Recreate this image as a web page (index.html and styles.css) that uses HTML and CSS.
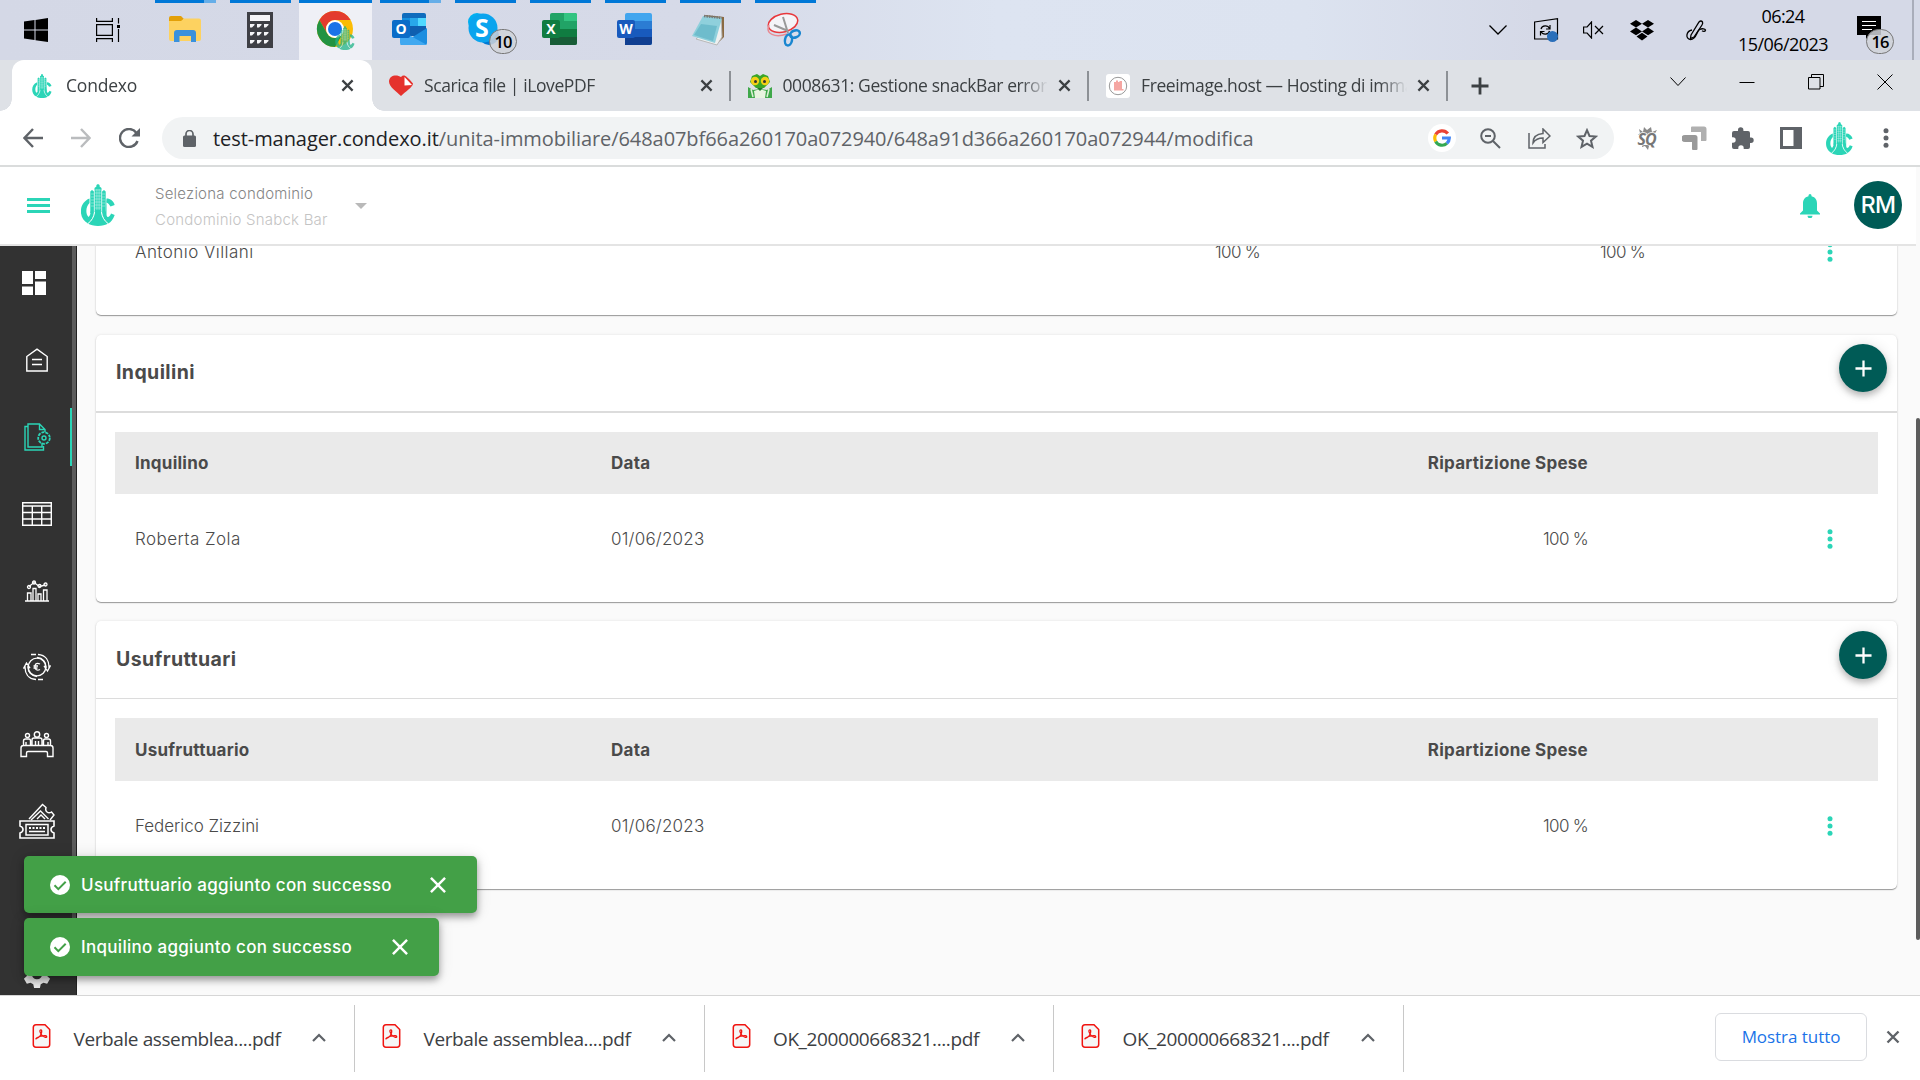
FILE: index.html
```html
<!DOCTYPE html>
<html lang="it">
<head>
    <meta charset="UTF-8">
    <meta name="viewport" content="width=device-width, initial-scale=1.0">
    <title>Condexo</title>
    <link rel="stylesheet" href="styles.css">
</head>
<body>
    <!-- Shared symbols -->
    <svg class="symbols">
        <symbol id="logo" viewBox="0 0 34 42">
            <path d="M13.500 29V4l1.900-1.500V1L17 0l1.600 1v1.500L20.500 4v25z M9.300 29V7.500L11 6l2 1.500V29z M21 29V7.500L23 6l1.700 1.500V29z"/>
            <path d="M8.500 14.500C-3 19-2.500 35 7 39.500c4-3 6-7 6.500-12H9.500c0 3-.5 4-2 5.500C4.500 30 4.500 23 8.500 19z"/>
            <path d="M25.500 14.500c4 0 7 2.500 8.200 6.500L29.500 22.500c-.8-1.500-2-3-4-4v10.500c0 2 0 3 1 4 2 0 3-2 3.500-3.500l3.700 1.500c-1.500 4.500-4 7.500-6.700 8.500-4-3-6-7-6.500-12h4z"/>
            <path d="M14 27h6c1 6 4 10 7.300 12.300-5 3.600-15.600 3.600-20.600 0C10 37 13 33 14 27z"/>
            <path class="logo-windows" d="M14 6h6M14 9h6M14 12h6M14 15h6M14 18h6M14 21h6M14 24h6M10 10h3M10 13h3M10 16h3M10 19h3M10 22h3M21 10h3M21 13h3M21 16h3M21 19h3M21 22h3M15.900 5v21M18.100 5v21M13.200 6v22M20.800 6v22"/>
            <path class="logo-gap" d="M13.500 28c-.5 5-3 9-6.500 11.500M20.500 28c.5 5 3 9 6.500 11.500"/>
        </symbol>
        <symbol id="close" viewBox="0 0 14 14"><path d="M1.500 1.500l11 11M12.500 1.500l-11 11"/></symbol>
        <symbol id="dots" viewBox="0 0 6 20"><circle cx="3" cy="2.700" r="2.500"/><circle cx="3" cy="10" r="2.500"/><circle cx="3" cy="17.300" r="2.500"/></symbol>
        <symbol id="plus" viewBox="0 0 18 18"><path d="M9 0.500v17M0.500 9h17"/></symbol>
        <symbol id="up" viewBox="0 0 14 9"><path d="M1 8l6-6 6 6"/></symbol>
        <symbol id="check" viewBox="0 0 20 20"><circle cx="10" cy="10" r="10" fill="#fff"/><path d="M4.500 10.300l3.800 3.800 7.400-7.400" fill="none" stroke="#43a047" stroke-width="2"/></symbol>
        <symbol id="pdf" viewBox="0 0 18 24">
            <path d="M3.500 .8h9l4.700 4.700V20.500q0 2.700-2.700 2.700H3.500Q.8 23.200.8 20.500V3.500Q.8.800 3.500.800" fill="#f6f6f6" stroke="#f01410" stroke-width="1.500"/>
            <path d="M4 14.500c3-1 5.500-4.500 5.200-7.500-.2-1.700-2-1.500-1.800.3.300 2.700 3 5.400 5.500 6 1.800.3 1.800-1.500 0-1.600-2.800-.1-6 .6-8.500 2-1.200.8-1.200 1.500-.4.800z" fill="none" stroke="#f01410" stroke-width="1.300"/>
        </symbol>
    </svg>

    <!-- Windows taskbar -->
    <div class="taskbar">
        <div class="task-start"><svg width="24" height="24" viewBox="0 0 24 24"><path d="M0 3.600l10.500-1.500v9.400H0zM11.500 2L24 0v11.500H11.500zM0 12.500h10.500v9.400L0 20.400zM11.500 12.500H24V24l-12.500-1.800z"/></svg></div>
        <div class="task-view"><svg width="25" height="24" viewBox="0 0 25 24" fill="none" stroke="#000" stroke-width="1.200"><path d="M.6 0v3.400h15.800V0M.6 6.600h15.800v10.800H.6zM.6 24v-3.400h15.800V24M22.500 0v5.500M22.500 11v13"/><path d="M21 7h3v3h-3z" fill="#000" stroke="none"/></svg></div>
        <div class="task multi">
            <svg width="32" height="28" viewBox="0 0 32 28"><path d="M0 2q0-2 2-2h10l3 3h-1v5H0z" fill="#e3a008"/><path d="M0 5h12l3-2.500h15q2 0 2 2V23q0 2-2 2H2q-2 0-2-2z" fill="#fdd260"/><path d="M5 26V17q0-3 3-3h16q3 0 3 3v9h-5v-6H10.500v6z" fill="#3a91dc"/></svg>
        </div>
        <div class="task">
            <svg width="26" height="36" viewBox="0 0 26 36"><path d="M0 0h26v36H0z" fill="#3e3f45"/><path d="M3 3h20v6H3z" fill="#f5f5f8"/><path d="M3 12h4.500v1L5 15.500H3zM10 12h4.500v1L12 15.500h-2zM17 12h4.500v1L19 15.500h-2zM3 20h4.500v1L5 23.500H3zM10 20h4.500v1L12 23.500h-2zM17 20h4.500v1L19 23.500h-2zM3 28h4.500v1L5 31.500H3zM10 28h4.500v1L12 31.500h-2zM17 28h4.500v1L19 31.500h-2z" fill="#f5f5f8"/></svg>
        </div>
        <div class="task active">
            <svg width="40" height="40" viewBox="0 0 40 40"><circle cx="19" cy="19" r="18" fill="#fbbc05"/><path d="M3.400 10A18 18 0 0 1 34.600 10H19a9 9 0 0 0-7.800 13.500z" fill="#e33b2e"/><path d="M3.400 10A18 18 0 0 0 19 37l7.800-13.500a9 9 0 0 1-15.600 0z" fill="#229342"/><circle cx="19" cy="19" r="9" fill="#fff"/><circle cx="19" cy="19" r="7" fill="#1a73e8"/><use class="plain-logo" href="#logo" x="19" y="16" width="20" height="24" fill="#20b488" opacity=".75"/></svg>
        </div>
        <div class="task multi">
            <svg width="36" height="34" viewBox="0 0 36 34"><path d="M10 2q0-2 2-2h20q2 0 2 2v14H10z" fill="#0f6cbd"/><path d="M10 5h8v8h-8z" fill="#1490df"/><path d="M18 5h8v8h-8z" fill="#28a8ea"/><path d="M26 5h8v8h-8z" fill="#50d9ff"/><path d="M10 13h24v10H10z" fill="#0f5fb0"/><path d="M8 32l27-17v15q0 2-2 2z" fill="#1c8ee0"/><path d="M8 17l27 15H10q-2 0-2-2z" fill="#40a8f0"/><rect y="7" width="18" height="18" rx="2" fill="#0a6cc8"/><text x="9" y="21" class="office">O</text></svg>
        </div>
        <div class="task">
            <svg width="36" height="36" viewBox="0 0 36 36"><circle cx="10" cy="10" r="9" fill="#00aff0"/><circle cx="22" cy="23" r="10" fill="#0078d4"/><circle cx="16" cy="16" r="14.500" fill="#0aa4ee"/><text x="15" y="25" class="skype">S</text></svg>
            <span class="badge">10</span>
        </div>
        <div class="task">
            <svg width="36" height="34" viewBox="0 0 36 34"><rect x="8" width="27" height="32" rx="2" fill="#21a366"/><path d="M22 0h11q2 0 2 2v6H22z" fill="#33c481"/><path d="M8 16h27v8H8z" fill="#107c41"/><path d="M8 24h27v6q0 2-2 2H8z" fill="#185c37"/><rect y="7" width="18" height="18" rx="2" fill="#107c41"/><text x="9" y="21" class="office">X</text></svg>
        </div>
        <div class="task">
            <svg width="36" height="34" viewBox="0 0 36 34"><rect x="8" width="27" height="32" rx="2" fill="#41a5ee"/><path d="M8 8h27v8H8z" fill="#2b7cd3"/><path d="M8 16h27v8H8z" fill="#185abd"/><path d="M8 24h27v6q0 2-2 2H8z" fill="#103f91"/><rect y="7" width="18" height="18" rx="2" fill="#185abd"/><text x="9" y="21" class="office">W</text></svg>
        </div>
        <div class="task">
            <svg class="notepad" width="34" height="32" viewBox="0 0 34 32"><path d="M14 1l19 2v20l-7 7z" fill="#8a6a42"/><path d="M5 25l25-22 1 20-5 8z" fill="#eef0f0" stroke="#b8b8b8"/><path d="M12 2l19 2-7 25L1 22z" fill="#8fd0dc"/><path d="M10 10l16 2-4 15L3 21z" fill="#58afc2" opacity=".6"/><path d="M13 2l18 2" stroke="#777" stroke-width="2.500" stroke-dasharray="1.500 1"/></svg>
        </div>
        <div class="task">
            <svg width="36" height="36" viewBox="0 0 36 36" fill="none"><ellipse cx="16" cy="11" rx="15" ry="9" transform="rotate(-14 16 11)" stroke="#e8383c" stroke-width="1.500" fill="#f4f4f8"/><path d="M2 13c-4 9 6 13 18 9" stroke="#e88a92" stroke-width="1.500"/><path d="M16 5l5 16M7 13l14 6" stroke="#999" stroke-width="2"/><ellipse cx="28" cy="22" rx="5" ry="3.500" transform="rotate(-20 28 22)" stroke="#1a86d0" stroke-width="2.500"/><ellipse cx="21.500" cy="28" rx="3.500" ry="5.500" transform="rotate(12 21.500 28)" stroke="#1a86d0" stroke-width="2.500"/></svg>
        </div>

        <div class="tray">
            <svg class="tray-up" width="18" height="10" viewBox="0 0 18 10" fill="none" stroke="#000" stroke-width="1.300"><path d="M.5.500L9 9 17.500.500"/></svg>
            <svg class="tray-sync" width="25" height="24" viewBox="0 0 25 24" fill="none" stroke="#000" stroke-width="1.200"><path d="M.6 4L23.500.700V21L.6 21z"/><path d="M7 11c1-4 7-4 8.500-.5M16 7v4h-4M15.500 13c-1 4-7 4-8.500.5M6.500 17.500v-4h4"/><circle cx="18.500" cy="18.500" r="5.500" fill="#2a6fba" stroke="none"/></svg>
            <svg class="tray-sound" width="21" height="18" viewBox="0 0 21 18" fill="none" stroke="#000" stroke-width="1.200"><path d="M.6 6h3.500L8.500 1v16l-4.400-5H.6zM12 5l8 8M20 5l-8 8"/></svg>
            <svg class="tray-box" width="24" height="21" viewBox="0 0 24 21"><path d="M6 0l6 3.800-6 3.800L0 3.800zM18 0l6 3.800-6 3.800-6-3.800zM6 7.600l6 3.800-6 3.800-6-3.800zM18 7.600l6 3.800-6 3.800-6-3.800zM12 12.800l5.500 3.700L12 20.500l-5.500-4z"/></svg>
            <svg class="tray-pen" width="21" height="21" viewBox="0 0 21 21" fill="none" stroke="#000" stroke-width="1.300"><path d="M5 15L13 2q2-2 3.500 0 .5 1.500-.5 3L8 17l-3.500 1.500z"/><path d="M6 10c-6 1-7 9-1.500 9.500 6 0 6-8 9-10 3-1.500 5.500-.5 6 .5-.5 2-2.500 1.500-3.500.8"/></svg>
            <div class="clock"><div>06:24</div><div>15/06/2023</div></div>
            <div class="notif"><svg width="24" height="24" viewBox="0 0 24 24"><path d="M0 0h24v19H13l-4 4v-4H0z"/><path d="M5 5.500h14M5 9.500h14M5 13.500h10" stroke="#fff"/></svg><span class="badge">16</span></div>
        </div>
    </div>

    <!-- Chrome tabs -->
    <div class="tabs">
        <div class="tab current">
            <svg class="favicon teal" width="20" height="24"><use href="#logo"/></svg>
            <span class="tab-title">Condexo</span>
            <svg class="tab-close"><use href="#close"/></svg>
        </div>
        <div class="tab">
            <svg class="favicon" width="24" height="22" viewBox="0 0 24 22"><path d="M12 21C8 17 0 12 0 6.500 0 0 8-1 12 2c3-3 5-1.500 12 6.500C24 12 16 17 12 21z" fill="#e5322d"/><path d="M15.500 2l7.500 8-7.500.500z" fill="#fff"/></svg>
            <span class="tab-title">Scarica file | iLovePDF</span>
            <svg class="tab-close"><use href="#close"/></svg>
        </div>
        <div class="tab">
            <svg class="favicon" width="24" height="24" viewBox="0 0 24 24"><path d="M0 13l5 3 7-1 7 1 5-3v11H0z" fill="#3fa84a"/><path d="M6 17l6-2 6 2-1 7H7z" fill="#e8f4e0"/><path d="M4 2l5-2 3 2 3-2 5 2 2 6-6 6H8L2 8z" fill="#3aa628"/><circle cx="7" cy="7" r="4.200" fill="#f2cf16"/><circle cx="17" cy="7" r="4.200" fill="#f2cf16"/><circle cx="7.500" cy="7.500" r="1.500" fill="#333"/><circle cx="16.500" cy="7.500" r="1.500" fill="#333"/><path d="M9 14l3 3 3-3z" fill="#1f7a2a"/><path d="M3 15l2 8M21 15l-2 8" stroke="#dff0d8" stroke-width="1.500"/></svg>
            <span class="tab-title">0008631: Gestione snackBar errore</span>
            <svg class="tab-close"><use href="#close"/></svg>
        </div>
        <div class="tab">
            <svg class="favicon" width="24" height="24" viewBox="0 0 24 24"><rect width="24" height="24" rx="3" fill="#fff"/><circle cx="12" cy="12" r="8.700" fill="none" stroke="#999"/><path d="M8 8h2V6.500h2V8h1.500V7H16v8h1.500v1.500H8z" fill="#f5a6a2"/></svg>
            <span class="tab-title">Freeimage.host — Hosting di immagini</span>
            <svg class="tab-close"><use href="#close"/></svg>
        </div>
        <svg class="new-tab"><use href="#plus"/></svg>
        <div class="window-buttons">
            <svg width="16" height="10" viewBox="0 0 16 10"><path d="M.5.500L8 8.500 15.500.500"/></svg>
            <svg width="16" height="10" viewBox="0 0 16 10"><path d="M.5 5.500h15"/></svg>
            <svg width="16" height="16" viewBox="0 0 16 16"><path d="M.5 3.500h11.500v11.500H.5zM3.500 3.500V.500h12v12H12"/></svg>
            <svg width="16" height="16" viewBox="0 0 16 16"><path d="M.5.500l15 15M15.500.500l-15 15"/></svg>
        </div>
    </div>

    <!-- Chrome toolbar -->
    <div class="toolbar">
        <svg class="nav-icon back" width="20" height="20" viewBox="0 0 20 20"><path d="M20 10H1.500M10 1L1.500 10l8.500 9"/></svg>
        <svg class="nav-icon forward" width="20" height="20" viewBox="0 0 20 20"><path d="M0 10h18.500M10 1l8.500 9-8.500 9"/></svg>
        <svg class="nav-icon reload" width="22" height="20" viewBox="0 0 22 20"><path d="M18.500 13A9 9 0 1 1 17.500 5"/><path d="M21 0v8.500h-8.500z" fill="#5f6368" stroke="none"/></svg>
        <div class="address">
            <svg width="13" height="17" viewBox="0 0 13 17"><path d="M0 7q0-1.500 1.500-1.500h10Q13 5.500 13 7v8.500q0 1.500-1.500 1.500h-10Q0 17 0 15.500z" fill="#5f6368"/><path d="M3 6V4a3.500 3.500 0 0 1 7 0v2" fill="none" stroke="#5f6368" stroke-width="1.700"/></svg>
            <div class="url">test-manager.condexo.it<span>/unita-immobiliare/648a07bf66a260170a072940/648a91d366a260170a072944/modifica</span></div>
            <div class="google"><svg width="18" height="18" viewBox="0 0 18 18" fill="none" stroke-width="3.200"><path d="M14.800 4.600A7.300 7.300 0 0 0 2.700 5.500" stroke="#ea4335"/><path d="M2.700 5.500a7.300 7.300 0 0 0 0 7" stroke="#fbbc05"/><path d="M2.700 12.500a7.300 7.300 0 0 0 11.200 1.900" stroke="#34a853"/><path d="M13.900 14.400A7.300 7.300 0 0 0 16.300 9H9" stroke="#4285f4"/></svg></div>
            <svg class="a-zoom" width="21" height="21" viewBox="0 0 21 21"><circle cx="8" cy="8" r="6.800"/><path d="M5 8h6M13 13l7 7"/></svg>
            <svg class="a-share" width="23" height="21" viewBox="0 0 23 21" stroke-width="1.500"><path d="M1 5v15h16v-4"/><path d="M5 15c0-6 3-9 10-9.500V1l7 7-7 6.500V10c-5 0-8 2-10 5z"/></svg>
            <svg class="a-star" width="22" height="21" viewBox="0 0 22 21"><path d="M11 2.200l2.500 5.800 6.300.6-4.800 4.100 1.500 6.200-5.500-3.300-5.500 3.300L7 12.700 2.200 8.600l6.300-.6z"/></svg>
        </div>
        <div class="ext sq"><svg width="24" height="25" viewBox="0 0 24 25"><path d="M4 3l4 3 1-5 3 3 4-3 1 5 5-2-3 5H3l2-2zM7 19h10l-3 1-1 4-3-4-3 1z" fill="#8a8a8a"/><text x="11.500" y="18.500" class="sq-text">SQ</text></svg></div>
        <div class="ext arrows"><svg width="25" height="25" viewBox="0 0 25 25"><path d="M9 1.500q0-1 1-1h12q2.500 0 2.500 2.500v11q0 1-1 1H19V6H9z" fill="#b0b0b0"/><path d="M3 9h10q2.500 0 2.500 2.500V23q0 1-1 1H11q-1 0-1-1v-7H3A3.400 3.400 0 0 1 3 9z" fill="#999"/></svg></div>
        <div class="ext puzzle"><svg width="22" height="22" viewBox="0 0 22 22"><path d="M6 4V3a2.700 2.700 0 0 1 5.400 0v1H16q2 0 2 2v4.500h1a2.700 2.700 0 0 1 0 5.400h-1V20q0 2-2 2h-4.300v-1a2.700 2.700 0 0 0-5.400 0v1H2q-2 0-2-2v-4.300h1a2.700 2.700 0 0 0 0-5.400H0V6q0-2 2-2z" fill="#5f6368"/></svg></div>
        <div class="ext panel"><svg width="22" height="22" viewBox="0 0 22 22"><path d="M0 0h22v22H0z" fill="#5f6368"/><path d="M3 3h10.500v16H3z" fill="#fff"/></svg></div>
        <svg class="ext-logo teal" width="27" height="33"><use href="#logo"/></svg>
        <svg class="menu-dots" width="6" height="20"><use href="#dots"/></svg>
    </div>

    <!-- Condexo page -->
    <div class="app">
        <div class="header">
            <div class="hamburger"><i></i><i></i><i></i></div>
            <svg class="brand teal" width="34" height="42"><use href="#logo"/></svg>
            <div class="selector">
                <div class="selector-label">Seleziona condominio</div>
                <div class="selector-value">Condominio Snabck Bar</div>
            </div>
            <div class="caret"></div>
            <svg class="bell" width="20" height="24" viewBox="0 0 20 24"><path d="M8.500 1.500a1.500 1.500 0 0 1 3 0v.800c4 .8 5.500 4 5.500 7.200v7l3 3v1H0v-1l3-3v-7c0-3.200 1.500-6.400 5.500-7.200zM7.500 21.800h5a2.500 2.500 0 0 1-5 0z"/></svg>
            <div class="avatar">RM</div>
        </div>
        <div class="content">
            <div class="sidebar">
                <div class="side-item"><svg class="shift" width="24" height="24" viewBox="0 0 24 24"><path d="M0 0h11v13H0zM0 15.500h11V24H0zM13 0h11v8H13zM13 10.500h11V24H13z" fill="#fff"/></svg></div>
                <div class="side-item"><svg width="22" height="24" viewBox="0 0 22 24"><path d="M.8 8.500L11 1.200l10.200 7.300v14.500H.8zM6 11.500h10M6 16.500h10"/></svg></div>
                <div class="side-item selected"><svg width="27" height="28" viewBox="0 0 27 28"><path d="M21 9V6.500L15.500 1H4v23h14v-4M15.500 1v5.500H21M4 3.500H1V27h18.500v-4"/><circle cx="20" cy="15" r="5.800" stroke-width="1.800" stroke-dasharray="3 1"/><circle cx="20" cy="15" r="2"/></svg></div>
                <div class="side-item"><svg width="30" height="24" viewBox="0 0 30 24"><path d="M.7.700h28.600v22.600H.7zM.7 4h28.600M.7 10.500h28.600M.7 17h28.600M10.300 4v19M19.700 4v19"/></svg></div>
                <div class="side-item"><svg width="24" height="22" viewBox="0 0 24 22" stroke-width="1.300"><path d="M0 21h24M2.500 21v-8h3.500v8M8 21V8.500h3V21M13 21v-7h3v7M18.500 21V10h3.500v11M4 6.500l5-4 5.500 4 6-1.500"/><circle cx="4" cy="7" r="1.500"/><circle cx="9" cy="2.500" r="1.500"/><circle cx="14.500" cy="6" r="1.500"/><circle cx="20.500" cy="4.500" r="1.500"/></svg></div>
                <div class="side-item"><svg width="28" height="28" viewBox="0 0 28 28" stroke-width="1.300"><circle cx="14" cy="14" r="8.800"/><path d="M15 1.500C23 2 26 8 26 14l1.500-1.500L24.500 18 21 13l2 1C23 9 20 5 14 4.500M13 26.500C5 26 2 20 2 14L.5 15.500 3.500 10 7 15l-2-1c0 5 3 9 9 9.500M8 1.500h5M15 26.500h5" /><path d="M17 11c-4-2-5.500 1-5 3 0 2.500 2 4 5 2.500M10.500 13h4.500M10.500 15h4"/></svg></div>
                <div class="side-item"><svg width="34" height="27" viewBox="0 0 34 27"><path d="M1 25.500V17q0-2.500 2.500-2.500h27Q33 14.500 33 17v8.500h-5.500V22q0-1.500-1.500-1.500H8Q6.500 20.500 6.500 22v3.500zM3.500 14V10q0-2 2-2H9q1.500 0 1.500 2v4M23.500 14V10q0-2 1.500-2h3.500q2 0 2 2v4M12 14V9q0-2 2-2h6q2 0 2 2v5M6 11v3M28 11v3M15.500 10v4M18.500 10v4"/><circle cx="17" cy="3.500" r="2.700"/><circle cx="7.500" cy="4.500" r="2"/><circle cx="26.500" cy="4.500" r="2"/></svg></div>
                <div class="side-item"><svg width="36" height="36" viewBox="0 0 36 36"><path d="M1 18h34v5q-3 1-3 3.500t3 3.500v5H1v-5q3-1 3-3.500T1 23z" stroke-width="1.600"/><path d="M7 21.500h22v10.500H7zM10 28.500h16" stroke-width="1.500"/><path d="M10 16L23.500 1.500l3.500 3q-1 3 1 4.500t4.500 0L35 12l-4 5M12 17L21.500 8l8 8M18 16l4-4 4 4"/><path d="M10 25h16" stroke-width="2" stroke-dasharray="2 1.500"/></svg></div>
                <div class="side-gear"><svg width="28" height="28" viewBox="0 0 24 24"><path d="M9.500 0h5l.7 3.300 2.300 1.300 3.200-1 2.500 4.300L20.700 10.200v3.600l2.500 2.200-2.500 4.400-3.200-1-2.300 1.300-.7 3.300h-5l-.7-3.300-2.300-1.300-3.200 1L.8 16l2.500-2.200v-3.600L.8 7.900l2.500-4.300 3.200 1 2.300-1.300zM12 7.500a4.500 4.500 0 1 0 0 9 4.500 4.500 0 0 0 0-9z" fill="#e8e8e8" stroke="none"/></svg></div>
            </div>
            <div class="main">
                <div class="card scrolled">
                    <table>
                        <tr><td class="name">Antonio Villani</td><td class="num w-quota">100 %</td><td class="num w-spese">100 %</td><td class="actions"><svg class="teal" width="6" height="20"><use href="#dots"/></svg></td></tr>
                    </table>
                </div>

                <div class="card middle">
                    <div class="card-header thick">
                        <h2>Inquilini</h2>
                        <button class="add"><svg width="17" height="17"><use href="#plus"/></svg></button>
                    </div>
                    <table>
                        <tr><th class="name">Inquilino</th><th>Data</th><th class="num w-rip">Ripartizione Spese</th><th class="actions"></th></tr>
                        <tr><td class="name">Roberta Zola</td><td>01/06/2023</td><td class="num">100 %</td><td class="actions"><svg class="teal" width="6" height="20"><use href="#dots"/></svg></td></tr>
                    </table>
                </div>

                <div class="card last">
                    <div class="card-header">
                        <h2>Usufruttuari</h2>
                        <button class="add"><svg width="17" height="17"><use href="#plus"/></svg></button>
                    </div>
                    <table>
                        <tr><th class="name">Usufruttuario</th><th>Data</th><th class="num w-rip">Ripartizione Spese</th><th class="actions"></th></tr>
                        <tr><td class="name tight">Federico Zizzini</td><td>01/06/2023</td><td class="num">100 %</td><td class="actions"><svg class="teal" width="6" height="20"><use href="#dots"/></svg></td></tr>
                    </table>
                </div>
            </div>
        </div>
        <div class="scroll-thumb"></div>

        <!-- Snackbars -->
        <div class="snackbars">
            <div class="snackbar">
                <svg width="20" height="20"><use href="#check"/></svg>
                <span>Usufruttuario aggiunto con successo</span>
                <svg class="snack-close" width="18" height="18"><use href="#close"/></svg>
            </div>
            <div class="snackbar second">
                <svg width="20" height="20"><use href="#check"/></svg>
                <span>Inquilino aggiunto con successo</span>
                <svg class="snack-close" width="18" height="18"><use href="#close"/></svg>
            </div>
        </div>
    </div>

    <!-- Download bar -->
    <div class="downloads">
        <div class="download"><svg class="pdf" width="19" height="24"><use href="#pdf"/></svg><span>Verbale assemblea....pdf</span><svg class="chevron" width="14" height="9"><use href="#up"/></svg></div>
        <div class="download"><svg class="pdf" width="19" height="24"><use href="#pdf"/></svg><span>Verbale assemblea....pdf</span><svg class="chevron" width="14" height="9"><use href="#up"/></svg></div>
        <div class="download"><svg class="pdf" width="19" height="24"><use href="#pdf"/></svg><span>OK_200000668321....pdf</span><svg class="chevron" width="14" height="9"><use href="#up"/></svg></div>
        <div class="download"><svg class="pdf" width="19" height="24"><use href="#pdf"/></svg><span>OK_200000668321....pdf</span><svg class="chevron" width="14" height="9"><use href="#up"/></svg></div>
        <button class="show-all">Mostra tutto</button>
        <svg class="close-bar" width="14" height="14"><use href="#close"/></svg>
    </div>
</body>
</html>
```

FILE: styles.css
```css
* {
    box-sizing: border-box;
}
body {
    margin: 0;
    width: 1920px;
    height: 1080px;
    overflow: hidden;
    display: flex;
    flex-direction: column;
    font-family: "Open Sans", "Noto Sans", sans-serif;
    background: #fff;
}
svg {
    display: block;
    flex: none;
}
.symbols {
    position: absolute;
    width: 0;
    height: 0;
}
.teal {
    fill: #2bd5b7;
}
.logo-windows, .logo-gap {
    stroke: #fff;
    stroke-width: .5;
    fill: none;
    opacity: .75;
}
.logo-gap {
    stroke-width: 1;
    opacity: 1;
}

/* Taskbar */
.taskbar {
    height: 60px;
    flex: none;
    display: flex;
    background: linear-gradient(90deg, #d4d8e6 0, #d6dae8 36%, #dde4f1 52%, #dce3f0 68%, #d5d9e7 80%, #d5d9e7 100%);
}
.task-start, .task-view {
    width: 72px;
    display: flex;
    align-items: center;
    justify-content: center;
}
.task-view {
    width: 76px;
    padding-right: 4px;
}
.task {
    width: 75px;
    position: relative;
    display: flex;
    align-items: center;
    justify-content: center;
    padding-right: 2px;
}
.task::before {
    content: "";
    position: absolute;
    top: 0;
    left: 7px;
    width: 61px;
    height: 3px;
    background: #0078d7;
}
.task.multi::before {
    background: linear-gradient(90deg, #0078d7 49px, #66aee8 49px);
}
.task.active {
    width: 73px;
    margin: 0 1px;
    padding-right: 0;
    background: #eff0f6;
}
.task.active::before {
    left: 0;
    width: 73px;
}
.notepad {
    margin-right: 3px;
}
.office {
    font: bold 14px "Open Sans", sans-serif;
    fill: #fff;
    text-anchor: middle;
}
.skype {
    font: bold 25px "Open Sans", sans-serif;
    fill: #fff;
    text-anchor: middle;
}
.badge {
    position: absolute;
    left: 41px;
    top: 29px;
    width: 28px;
    height: 25px;
    border: 1px solid #777;
    border-radius: 13px;
    background: rgba(208, 210, 216, .85);
    font: 600 16.500px/23px "Open Sans", sans-serif;
    letter-spacing: -1px;
    text-align: center;
}
.tray {
    margin-left: auto;
    display: flex;
    align-items: center;
    width: 431px;
    position: relative;
}
.tray::after {
    content: "";
    position: absolute;
    right: 6px;
    top: 0;
    width: 2px;
    height: 60px;
    background: #a9adba;
}
.tray-sync {
    margin-left: 27px;
}
.tray-sound {
    margin-left: 24px;
}
.tray-box {
    margin-left: 26px;
}
.tray-pen {
    margin-left: 32px;
}
.clock {
    width: 110px;
    margin-left: 21px;
    text-align: center;
    font-size: 18px;
    line-height: 28px;
    letter-spacing: -.55px;
}
.notif {
    position: relative;
    margin-left: 19px;
}
.notif svg {
    position: relative;
    top: -2px;
}
.notif .badge {
    left: 9px;
    top: 11px;
}

/* Tabs */
.tabs {
    height: 51px;
    flex: none;
    display: flex;
    background: #dee1e6;
    padding-left: 12px;
    position: relative;
}
.tab {
    width: 358.500px;
    height: 51px;
    display: flex;
    align-items: center;
    padding: 0 18px 0 17px;
    position: relative;
}
.tab:not(.current)::after {
    content: "";
    position: absolute;
    right: 0;
    top: 11px;
    width: 2px;
    height: 30px;
    background: #8d9196;
}
.tab.current {
    width: 360px;
    background: #fff;
    border-radius: 12px 12px 0 0;
    padding-left: 20px;
}
.tab.current::before, .tab.current::after {
    content: "";
    position: absolute;
    bottom: 0;
    width: 12px;
    height: 12px;
    left: -12px;
    background: radial-gradient(circle at 0 0, #dee1e6 11.500px, #fff 12px);
}
.tab.current::after {
    left: 360px;
    background: radial-gradient(circle at 100% 0, #dee1e6 11.500px, #fff 12px);
}
.tab-title {
    flex: 1;
    margin-left: 11px;
    margin-right: 10px;
    margin-top: -1px;
    font-size: 17.500px;
    letter-spacing: -.4px;
    color: #3c4043;
    white-space: nowrap;
    overflow: hidden;
    -webkit-mask-image: linear-gradient(90deg, #000 90%, transparent 100%);
}
.current .tab-title {
    margin-left: 14px;
    letter-spacing: -.2px;
}
.tab-close {
    width: 13px;
    height: 13px;
    stroke: #3c4043;
    stroke-width: 2.400;
}
.new-tab {
    width: 18px;
    height: 18px;
    margin: 17px 0 0 23px;
    stroke: #3c4043;
    stroke-width: 2.800;
}
.window-buttons {
    margin-left: auto;
    display: flex;
    align-items: center;
    gap: 53px;
    height: 43px;
    padding-right: 27px;
    fill: none;
    stroke: #000;
}

/* Toolbar */
.toolbar {
    height: 56px;
    flex: none;
    display: flex;
    align-items: center;
    padding-left: 23px;
    border-bottom: 2px solid #dadcdc;
}
.nav-icon {
    fill: none;
    stroke: #5f6368;
    stroke-width: 2.400;
}
.forward {
    margin-left: 28px;
    stroke: #babcbe;
}
.reload {
    margin-left: 28px;
}
.address {
    width: 1452px;
    height: 42px;
    margin-left: 21px;
    border-radius: 21px;
    background: #f1f3f4;
    display: flex;
    align-items: center;
    padding-left: 21px;
    fill: none;
    stroke: #5f6368;
    stroke-width: 2;
}
.address > svg:first-child {
    stroke: none;
}
.url {
    width: 1201px;
    margin-left: 17px;
    font-size: 20px;
    color: #202124;
    white-space: nowrap;
    letter-spacing: -.065px;
}
.url span {
    color: #5f6368;
}
.google {
    width: 28px;
    height: 28px;
    margin-left: 14px;
    margin-right: -17px;
    border-radius: 14px;
    background: #fff;
    display: flex;
    align-items: center;
    justify-content: center;
}
.a-zoom {
    margin-left: 41px;
}
.a-share {
    margin-left: 27px;
}
.a-star {
    margin-left: 25px;
}
.ext {
    width: 25px;
    display: flex;
    justify-content: center;
}
.sq {
    margin-left: 20px;
}
.sq-text {
    font: italic bold 16px "Open Sans", sans-serif;
    fill: #777;
    stroke: #fff;
    stroke-width: 1.500;
    paint-order: stroke;
    text-anchor: middle;
    letter-spacing: -1px;
}
.arrows {
    margin-left: 23px;
}
.puzzle {
    margin-left: 23px;
}
.panel {
    margin-left: 23px;
}
.ext-logo {
    margin-left: 23px;
}
.menu-dots {
    margin-left: 30px;
    fill: #5f6368;
}

/* App */
.app {
    height: 828px;
    flex: none;
    position: relative;
    display: flex;
    flex-direction: column;
    overflow: hidden;
    background: #fafafa;
    font-family: Inter, "Open Sans", sans-serif;
}
.header {
    width: 1916px;
    height: 79px;
    flex: none;
    display: flex;
    align-items: center;
    padding-left: 27px;
    background: #fff;
    border-bottom: 2px solid #e4e4e4;
}
.hamburger {
    width: 23px;
    display: flex;
    flex-direction: column;
    gap: 3px;
}
.hamburger i {
    height: 3px;
    background: #2bd5b7;
}
.brand {
    margin-left: 31px;
    margin-top: -2px;
}
.selector {
    width: 176px;
    margin-left: 40px;
    margin-top: 2px;
    font-size: 15px;
    font-weight: 300;
    line-height: 26px;
    letter-spacing: .22px;
    white-space: nowrap;
}
.selector-label {
    color: #858585;
}
.selector-value {
    color: #c4c4c4;
}
.caret {
    margin-left: 24px;
    border: 6px solid transparent;
    border-top-color: #b9b9b9;
    border-bottom: 0;
}
.bell {
    margin-left: auto;
    fill: #2bd5b7;
}
.avatar {
    width: 48px;
    height: 48px;
    margin: -2px 14px 0 34px;
    border-radius: 24px;
    background: #005b56;
    color: #fff;
    font-size: 23px;
    font-weight: 500;
    line-height: 48px;
    text-align: center;
    letter-spacing: -.8px;
}
.content {
    flex: 1;
    min-height: 0;
    display: flex;
}

/* Sidebar */
.sidebar {
    width: 77px;
    flex: none;
    background: #323232;
    position: relative;
    border-right: 1px solid #222;
    overflow: hidden;
}
.sidebar::after {
    content: "";
    position: absolute;
    left: 72px;
    top: 0;
    width: 4px;
    height: 730px;
    background: #5c5c5c;
}
.side-item {
    width: 72px;
    height: 76.800px;
    display: flex;
    align-items: center;
    justify-content: center;
    padding-left: 2px;
    padding-bottom: 2px;
    fill: none;
    stroke: #fff;
    stroke-width: 1.400;
}
.side-item .shift {
    margin-right: 6px;
    stroke: none;
}
.side-item.selected {
    stroke: #2bd5b7;
    background: linear-gradient(#2bd5b7, #2bd5b7) right 8px / 2px 58px no-repeat;
}
.side-gear {
    margin: 100px 0 0 23px;
}

/* Cards */
.main {
    width: 1805px;
    margin-left: 17px;
    padding: 0 2px;
    overflow: hidden;
    flex: none;
}
.card {
    margin-bottom: 20px;
    height: 267px;
    background: #fff;
    border-radius: 5px;
    box-shadow: 0 1px 1px #999, 0 0 3px rgba(0, 0, 0, .1);
}
.card.scrolled {
    height: 127px;
    margin-top: -58px;
    padding-top: 1px;
}
.card.middle {
    margin-bottom: 19px;
}
.card.last {
    height: 268px;
}
.card-header {
    height: 78px;
    display: flex;
    justify-content: space-between;
    padding: 0 10px 0 20px;
    border-bottom: 1px solid #dcdcdc;
}
.card-header.thick {
    border-bottom-width: 2px;
}
h2 {
    margin: 0;
    font-size: 19.500px;
    font-weight: 700;
    color: #4a4a4a;
    line-height: 74px;
    letter-spacing: .4px;
}
.last h2 {
    line-height: 76px;
}
.add {
    width: 48px;
    height: 48px;
    margin-top: 9px;
    padding: 0;
    border: none;
    border-radius: 24px;
    background: #005b56;
    display: flex;
    align-items: center;
    justify-content: center;
    stroke: #fff;
    stroke-width: 2.400;
    box-shadow: 0 4px 6px rgba(0, 0, 0, .22), 0 1px 14px rgba(0, 0, 0, .12);
}
.last .add {
    margin-top: 10px;
}
table {
    width: 1763px;
    margin: 19px 19px 0;
    border-collapse: collapse;
    table-layout: fixed;
    color: #4a4a4a;
    font-size: 17px;
}
.scrolled table {
    margin-top: 18px;
}
th {
    height: 62px;
    padding: 0 19px;
    background: #eaeaea;
    font-size: 17px;
    font-weight: 700;
    text-align: left;
    letter-spacing: .25px;
}
.last th {
    height: 63px;
}
td {
    height: 89px;
    padding: 0 19px;
    font-weight: 300;
    letter-spacing: .2px;
}
.name {
    width: 477px;
    padding-left: 20px;
}
td.name {
    letter-spacing: .45px;
}
td.name.tight {
    letter-spacing: -.05px;
}
.num {
    text-align: right;
}
td.num {
    letter-spacing: -.7px;
}
.w-quota {
    width: 687px;
}
.w-spese {
    width: 385px;
}
.actions {
    padding: 0 45px 0 0;
}
.w-rip {
    width: 600px;
}
.name + th, .name + td:not(.num) {
    width: 415px;
}
.actions svg {
    margin-left: auto;
}
.scroll-thumb {
    position: absolute;
    right: 0;
    top: 251px;
    width: 4px;
    height: 522px;
    border-radius: 2px;
    background: #5c5c5c;
}

/* Snackbars */
.snackbars {
    position: absolute;
    left: 24px;
    top: 689px;
    display: flex;
    flex-direction: column;
    gap: 5px;
}
.snackbar {
    width: 453px;
    height: 57px;
    display: flex;
    align-items: center;
    padding: 0 30px 0 26px;
    border-radius: 5px;
    background: #43a047;
    color: #fff;
    font-size: 17px;
    font-weight: 500;
    letter-spacing: .3px;
    box-shadow: 0 4px 7px rgba(0, 0, 0, .35), 0 1px 16px rgba(0, 0, 0, .12);
}
.snackbar.second {
    width: 415px;
    height: 58px;
}
.snackbar span {
    margin-left: 11px;
    white-space: nowrap;
}
.snack-close {
    margin-left: auto;
    stroke: #fff;
    stroke-width: 1.900;
}

/* Downloads */
.downloads {
    flex: 1;
    display: flex;
    padding-top: 9px;
    border-top: 1px solid #d6d6d6;
    background: #fff;
}
.download {
    width: 349.500px;
    height: 67px;
    padding-left: 27px;
    display: flex;
    align-items: center;
    border-right: 1px solid #c8c8c8;
    font-size: 19px;
    color: #3c4043;
}
.download:first-child {
    width: 355px;
    padding-left: 32px;
}
.pdf {
    margin-bottom: 5px;
}
.download span {
    width: 215px;
    margin-left: 22.500px;
    white-space: nowrap;
    letter-spacing: -.4px;
}
.chevron {
    margin-left: 23px;
    margin-bottom: 3px;
    fill: none;
    stroke: #5f6368;
    stroke-width: 2.200;
}
.show-all {
    width: 152px;
    height: 48px;
    margin: 8px 0 0 auto;
    padding: 0 0 2px;
    border: 1px solid #dadce0;
    border-radius: 6px;
    background: #fff;
    color: #1a73e8;
    font: 500 17px "Open Sans", sans-serif;
    letter-spacing: -.05px;
}
.close-bar {
    margin: 25px 20px 0 19px;
    stroke: #5f6368;
    stroke-width: 2.400;
}
```
